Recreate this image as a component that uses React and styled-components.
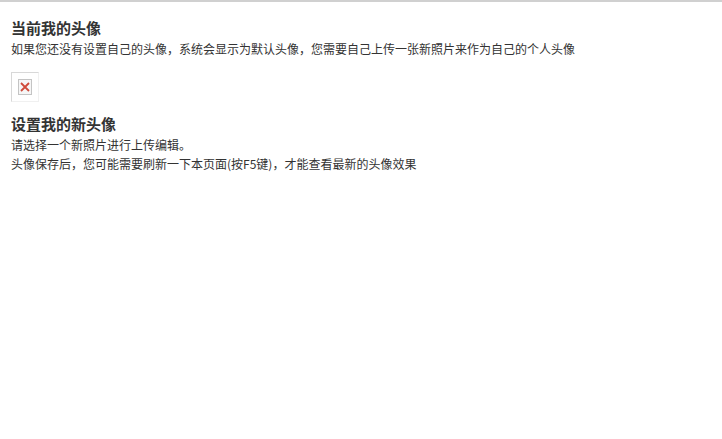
import React from "react";
import styled, { createGlobalStyle } from "styled-components";

const GlobalStyle = createGlobalStyle`
  html, body {
    margin: 0;
    padding: 0;
    background: #fff;
  }
`;

function App() {
  return (
    <Page>
      <GlobalStyle />
      <Title>当前我的头像</Title>
      <Line>如果您还没有设置自己的头像，系统会显示为默认头像，您需要自己上传一张新照片来作为自己的个人头像</Line>
      <AvatarFrame>
        <BrokenImage>
          <svg width="10" height="10" viewBox="0 0 10 10">
            <path d="M1 1L9 9M9 1L1 9" stroke="#cf4a3a" strokeWidth="1.8" />
          </svg>
        </BrokenImage>
      </AvatarFrame>
      <Title>设置我的新头像</Title>
      <Line>请选择一个新照片进行上传编辑。</Line>
      <Line>头像保存后，您可能需要刷新一下本页面(按F5键)，才能查看最新的头像效果</Line>
    </Page>
  );
}

const Page = styled.div`
  box-sizing: border-box;
  height: 439px;
  padding: 16px 11px 0;
  border-top: 2px solid #d0d0d0;
  font-family: "Noto Sans CJK SC", "Liberation Sans", sans-serif;
  color: #333;
  overflow: hidden;
`;

const Title = styled.h2`
  margin: 0 0 1px;
  font-size: 15px;
  line-height: 20px;
  font-weight: 700;
  color: #333;
`;

const Line = styled.p`
  margin: 0;
  font-size: 12px;
  line-height: 19px;
  color: #333;
`;

const AvatarFrame = styled.div`
  box-sizing: border-box;
  width: 28px;
  height: 30px;
  margin: 14px 0 12px;
  display: flex;
  align-items: center;
  justify-content: center;
  border: 1px solid #d8d8d8;
  border-bottom-color: #f0f0f0;
  border-right-color: #f0f0f0;
`;

const BrokenImage = styled.div`
  box-sizing: border-box;
  width: 14px;
  height: 16px;
  display: flex;
  align-items: center;
  justify-content: center;
  border: 1px solid #c4c4c4;
  background: #f6f6f6;
`;

export default App;
